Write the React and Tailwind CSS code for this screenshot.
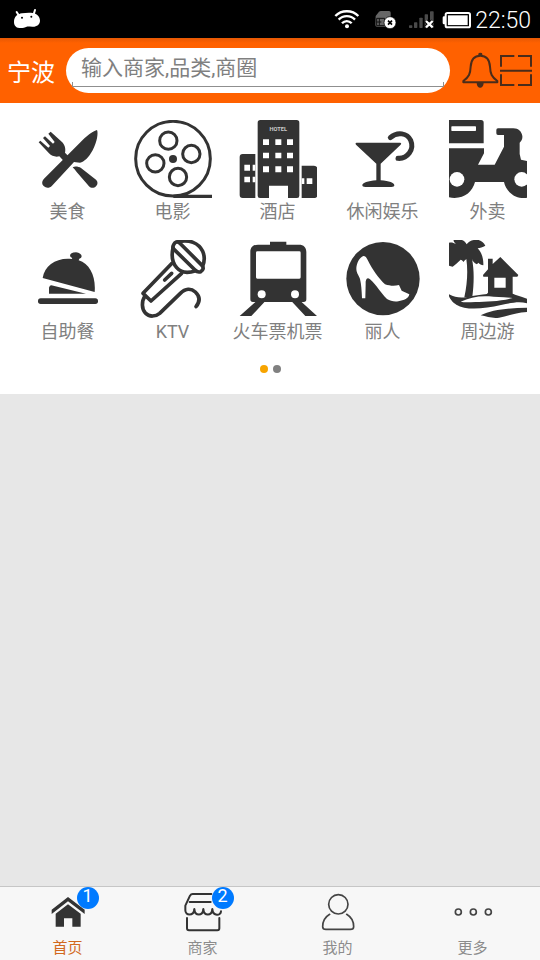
function StatusBar() {
  return (
    <div className="flex h-[38px] items-center justify-between bg-black pl-3 pr-[9px] text-white">
      <svg viewBox="36 24 90 66" className="h-[22px] w-[30px]" aria-hidden="true">
        <path d="M50 36 L56 46 M105 30 L101 43" stroke="#fff" strokeWidth="6" strokeLinecap="round" />
        <path
          d="M42 66 C42 50 52 42 66 40 C76 38 90 37 98 39 C112 41 120 51 120 62 C120 74 109 81 97 80 C89 80 84 79 80 80 C74 83 66 85 58 84 C47 83 42 76 42 66Z"
          fill="#fff"
        />
        <circle cx="66" cy="53" r="3" />
        <circle cx="94" cy="50" r="3" />
      </svg>
      <div className="flex items-center gap-1">
        <svg viewBox="192 24 108 66" className="h-[22px] w-9" fill="none" stroke="#fff" strokeWidth="7" aria-hidden="true">
          <path d="M199 48 C217 29 250 29 268 48" />
          <path d="M209 59 C222 45 245 45 258 59" />
          <path d="M219 70 C227 61 240 61 248 70" />
          <circle cx="234" cy="79" r="6" fill="#fff" stroke="none" />
        </svg>
        <svg viewBox="309 24 90 66" className="h-[22px] w-[30px]" aria-hidden="true">
          <path d="M317 48 L327 35 Q329 33 333 33 H357 Q362 33 362 38 V80 H321 Q316 80 316 75Z" fill="#666" />
          <path d="M320 55 H344 V77 H320Z M320 66 H334 M328 55 V77" stroke="#111" strokeWidth="3" fill="none" />
          <circle cx="360" cy="68" r="18" fill="#fff" stroke="#000" strokeWidth="2" />
          <path d="M354 62 L366 74 M366 62 L354 74" stroke="#000" strokeWidth="5" />
        </svg>
        <svg viewBox="411 24 90 66" className="h-[22px] w-[30px]" aria-hidden="true">
          <g fill="#4a4a4a">
            <rect x="417" y="76" width="10" height="8" rx="2" />
            <rect x="432" y="67" width="10" height="17" rx="2" />
            <rect x="448" y="53" width="10" height="31" rx="2" />
            <rect x="480" y="34" width="11" height="50" rx="2" />
            <rect x="464" y="43" width="10" height="41" rx="2" />
          </g>
          <path d="M468 63 L488 82 M488 63 L468 82" stroke="#000" strokeWidth="12" />
          <path d="M468 63 L488 82 M488 63 L468 82" stroke="#fff" strokeWidth="7" />
        </svg>
        <svg viewBox="513 24 90 66" className="h-[22px] w-[30px]" aria-hidden="true">
          <rect x="527" y="39" width="73" height="43" rx="5" fill="none" stroke="#fff" strokeWidth="6" />
          <path d="M526 49 H522 Q518 49 518 53 V69 Q518 73 522 73 H526Z" fill="#fff" />
          <rect x="533" y="45" width="61" height="31" fill="#fff" stroke="#000" strokeWidth="2" />
        </svg>
        <time className="pt-1 text-[23px] leading-7 font-light">22:50</time>
      </div>
    </div>
  )
}

function SearchHeader() {
  return (
    <header className="flex h-[65px] items-center bg-[#ff6100] bg-linear-to-b from-[#e65804] to-[#ff6100] to-[5px] pl-[7px] pr-2">
      <button type="button" className="pt-1 text-2xl text-white">
        宁波
      </button>
      <form className="mr-3 ml-[11px] h-[45px] min-w-0 flex-1 rounded-full bg-white px-1.5" onSubmit={(e) => e.preventDefault()}>
        <div className="flex h-[39px] items-end border-b border-[#8f8f8f]">
          <span className="h-1 w-px bg-[#8f8f8f]" />
          <input
            type="search"
            aria-label="搜索"
            placeholder="输入商家,品类,商圈"
            className="h-9 min-w-0 flex-1 bg-transparent px-2 text-[21px] outline-none placeholder:text-[#808080]"
          />
          <span className="h-1 w-px bg-[#8f8f8f]" />
        </div>
      </form>
      <button type="button" aria-label="消息">
        <svg viewBox="575 156 114 111" className="h-[37px] w-[38px]" fill="none" stroke="#4a2c1a" strokeWidth="6" strokeLinejoin="round" aria-hidden="true">
          <path d="M630 167 C610 167 602 182 601 200 C600 222 596 230 579 243 V247 H681 V243 C664 230 660 222 659 200 C658 182 650 167 630 167Z" />
          <path d="M624 167 V162 Q624 158 630 158 Q636 158 636 162 V167Z M619 248 H640 C640 268 619 268 619 248Z" fill="#4a2c1a" stroke="none" />
        </svg>
      </button>
      <button type="button" aria-label="扫一扫">
        <svg viewBox="690 162 96 99" className="h-[33px] w-8" fill="none" stroke="#4a2c1a" strokeWidth="6" aria-hidden="true">
          <path d="M693 200 V168 H733 M744 168 H783 V200 M690 212 H786 M693 223 V255 H733 M744 255 H783 V223" />
        </svg>
      </button>
    </header>
  )
}

const FoodIcon = () => (
  <svg viewBox="25 30 234 234" className="size-[78px]" fill="#333" aria-hidden="true">
    <path d="M229 60 C233 68 230 95 216 121 C204 143 190 156 178 158 L160 156 L94 227 C87 235 76 235 70 229 C63 223 63 213 70 206 L180 96 C196 80 214 65 229 60Z" />
    <path d="M54 97 L59 92 L83 113 L88 108 L67 84 L73 79 L97 101 L102 96 L83 71 L90 65 L124 96 C132 104 136 116 133 128 L145 140 L130 154 L116 139 C104 142 93 138 85 130Z" />
    <path d="M156 172 C163 168 174 170 181 174 L226 209 C232 215 232 223 226 229 C220 235 211 235 205 229 L168 186 C164 181 161 177 156 172Z" />
  </svg>
)

const MovieIcon = () => (
  <svg viewBox="340 30 234 234" className="size-[78px]" fill="none" stroke="#333" strokeWidth="9" aria-hidden="true">
    <circle cx="457" cy="146" r="112" />
    <circle cx="443" cy="92" r="26" />
    <circle cx="512" cy="132" r="26" />
    <circle cx="404" cy="160" r="26" />
    <circle cx="472" cy="201" r="26" />
    <circle cx="457" cy="147" r="12" fill="#333" stroke="none" />
    <path d="M458 259 H574" strokeWidth="10" />
  </svg>
)

const HotelIcon = () => (
  <svg viewBox="55 30 234 234" className="size-[78px]" fill="#333" aria-hidden="true">
    <path d="M119 30 H228 Q236 30 236 38 V257 Q236 264 229 264 H202 V227 H145 V264 H118 Q111 264 111 257 V38 Q111 30 119 30Z" />
    <path d="M66 132 H104 V264 H66 Q57 264 57 255 V141 Q57 132 66 132Z M243 167 H280 Q290 167 290 177 V255 Q290 264 281 264 H243Z" />
    <g fill="#fff">
      <path d="M127 88h18v17h-18z M164 88h18v17h-18z M199 88h18v17h-18z" />
      <path d="M127 128h18v17h-18z M164 128h18v17h-18z M199 128h18v17h-18z" />
      <path d="M127 169h18v18h-18z M164 169h18v18h-18z M199 169h18v18h-18z" />
      <path d="M71 164h17v18h-17z M96 164h8v18h-8z M71 200h17v17h-17z M96 200h8v17h-8z M243 205h8v17h-8z M258 205h17v17h-17z" />
    </g>
    <text x="173" y="64" textAnchor="middle" fontSize="17" fontWeight="bold" fill="#ccc">
      HOTEL
    </text>
  </svg>
)

const CocktailIcon = () => (
  <svg viewBox="370 30 234 234" className="size-[78px]" fill="#333" aria-hidden="true">
    <path d="M407 98 H539 Q544 99 540 104 L480 161 V211 C506 213 521 218 521 226 Q521 231 512 231 H434 Q425 231 425 226 C425 218 442 213 467 211 V161 L406 104 Q402 99 407 98Z" />
    <path d="M509 83 C530 64 560 69 570 91 C582 119 560 147 532 145" fill="none" stroke="#333" strokeWidth="15" strokeLinecap="round" />
  </svg>
)

const ScooterIcon = () => (
  <svg viewBox="85 30 234 234" className="size-[78px]" fill="#333" aria-hidden="true">
    <path d="M85 30 H181 Q189 30 189 38 V100 H85Z" />
    <path d="M85 115 H190 V130 L172 164 H222 L250 110 V75 H232 Q227 75 227 70 V60 Q227 55 232 55 H278 C294 55 303 65 305 78 C306 87 302 93 297 98 V132 L301 149 L319 153 V263 C285 270 256 245 250 216 H163 C155 248 126 270 85 262Z" />
    <rect x="92" y="49" width="74" height="14" rx="2" fill="#fff" />
    <circle cx="109" cy="208" r="22" fill="#fff" />
    <circle cx="303" cy="208" r="22" fill="#fff" />
  </svg>
)

const BuffetIcon = () => (
  <svg viewBox="25 30 234 234" className="size-[78px]" fill="#333" aria-hidden="true">
    <path d="M66 144 C72 106 108 82 153 87 L155 84 C143 79 147 67 166 67 C184 69 188 82 176 86 L174 91 C208 102 226 140 222 186Z" />
    <path d="M92 166 L196 191 H85 V173 Q87 166 92 166Z" />
    <rect x="52" y="205" width="180" height="17" rx="8" />
  </svg>
)

const MicIcon = () => (
  <svg viewBox="340 30 234 234" className="size-[78px]" fill="none" stroke="#333" strokeWidth="11" strokeLinejoin="round" strokeLinecap="round" aria-hidden="true">
    <path d="M473 35 C505 28 534 38 546 64 C554 82 551 96 546 108" />
    <path d="M459 44 C463 36 470 33 477 39 L544 106 C550 113 548 120 540 125 C532 128 528 125 523 120 L460 58 C456 54 456 49 459 44Z" />
    <path d="M457 54 C451 80 456 99 468 113 C480 127 500 131 525 122" />
    <path d="M454 100 L367 190 L391 213 L483 130" />
    <path d="M432 150 L453 130" />
    <path d="M373 198 C362 214 363 237 374 249 C386 262 405 260 417 250 L479 190 C494 175 511 174 524 186 C539 200 539 214 526 230" />
  </svg>
)

const TrainIcon = () => (
  <svg viewBox="55 30 234 234" className="size-[78px]" fill="#333" aria-hidden="true">
    <path
      fillRule="evenodd"
      d="M148 35 H197 V44 H235 C249 44 257 52 257 66 V208 Q257 216 249 216 H97 Q89 216 89 208 V66 C89 52 98 44 112 44 H148Z M110 64 Q106 64 106 68 V142 Q106 146 110 146 H236 Q240 146 240 142 V68 Q240 64 236 64Z"
    />
    <circle cx="123" cy="193" r="12" fill="#fff" />
    <circle cx="223" cy="193" r="12" fill="#fff" />
    <path d="M105 215 H132 L92 258 H57Z M214 215 H242 L289 258 H254Z" />
  </svg>
)

const HeelIcon = () => (
  <svg viewBox="370 30 234 234" className="size-[78px]" aria-hidden="true">
    <circle cx="487" cy="146" r="110" fill="#333" />
    <path
      d="M428 78 C434 78 438 83 441 90 C455 118 474 145 493 163 C508 168 521 169 535 165 L543 182 L566 193 C564 205 550 211 533 214 C520 216 509 213 499 207 C481 190 468 166 448 148 C439 140 434 148 435 163 L434 205 H424 C423 181 422 164 418 147 C413 133 407 130 407 115 C408 98 417 82 428 78Z"
      fill="#fff"
    />
  </svg>
)

const TravelIcon = () => (
  <svg viewBox="85 30 234 234" className="size-[78px]" fill="#333" aria-hidden="true">
    <path d="M85 38 C92 36 99 38 106 42 C100 37 98 33 99 30 H124 C131 32 135 37 138 43 C145 32 158 28 174 30 C184 33 190 39 194 47 C186 52 178 54 171 55 C183 67 189 86 188 106 C182 105 177 103 173 98 L169 103 C160 98 155 93 154 86 C161 122 160 160 155 200 L131 202 C140 160 142 122 137 87 C134 90 131 92 129 96 C126 92 123 90 120 89 C112 97 104 104 96 110 L85 107Z" />
    <path
      fillRule="evenodd"
      d="M187 135 L202 118 V86 H216 V102 L239 81 L293 135 L290 140 H276 V191 L286 197 H193 L202 188 V140 H188Z M221 143 V173 H255 V143Z"
    />
    <path d="M85 193 C102 202 116 204 135 202 C168 195 202 190 243 188 C270 187 293 199 319 206 V220 C294 212 272 219 241 225 C189 237 135 242 107 224 C97 219 88 207 85 199Z" />
    <path d="M120 215 C145 203 174 197 205 199 C225 202 247 200 276 204 C240 214 197 215 164 216 C148 216 135 219 120 215Z" fill="#fff" />
    <path d="M180 256 C213 239 263 234 319 233 V246 C280 249 260 258 235 263 C216 266 199 260 180 256Z" />
  </svg>
)

const categories = [
  { name: '美食', Icon: FoodIcon },
  { name: '电影', Icon: MovieIcon },
  { name: '酒店', Icon: HotelIcon },
  { name: '休闲娱乐', Icon: CocktailIcon },
  { name: '外卖', Icon: ScooterIcon },
  { name: '自助餐', Icon: BuffetIcon },
  { name: 'KTV', Icon: MicIcon },
  { name: '火车票机票', Icon: TrainIcon },
  { name: '丽人', Icon: HeelIcon },
  { name: '周边游', Icon: TravelIcon },
]

function CategoryPanel() {
  return (
    <section className="bg-white pt-[17px] pb-[21px]">
      <div className="grid grid-cols-5 gap-y-3.5 pl-[15px]">
        {categories.map(({ name, Icon }) => (
          <button key={name} type="button" className="flex flex-col items-center">
            <Icon />
            <span className="text-lg leading-7 whitespace-nowrap text-[#808080]">{name}</span>
          </button>
        ))}
      </div>
      <div className="mt-[19px] flex justify-center gap-[5px]">
        <span className="size-2 rounded-full bg-[#f7a400]" />
        <span className="size-2 rounded-full bg-[#808080]" />
      </div>
    </section>
  )
}

const HomeIcon = () => (
  <svg viewBox="142 36 120 120" className="size-10" fill="#333" aria-hidden="true">
    <path d="M153 89 L202 51 L252 89 V102 L202 64 L153 102Z" />
    <path d="M165 101 L202 73 L240 101 V140 H215 V115 H190 V140 H165Z" />
  </svg>
)

const ShopIcon = () => (
  <svg viewBox="547 36 120 120" className="size-10" fill="none" stroke="#333" strokeWidth="6" strokeLinecap="round" strokeLinejoin="round" aria-hidden="true">
    <path d="M632 42 H576 Q571 42 568 47 L554 77 V91 C554 108 578 108 581 90 C584 108 605 108 608 90 C611 108 632 108 635 90 C638 108 660 108 661 94" />
    <path d="M567 66 H630 M581 90 V87 M608 90 V87 M635 90 V87" />
    <path d="M559 114 V145 Q559 151 565 151 H650 Q656 151 656 145 V114" />
  </svg>
)

const UserIcon = () => (
  <svg viewBox="142 36 120 120" className="size-10" fill="none" stroke="#444" strokeWidth="5" strokeLinecap="round" aria-hidden="true">
    <circle cx="203" cy="73" r="29" />
    <path d="M177 103 C162 112 156 126 156 140 Q156 148 166 148 H239 Q249 148 249 140 C249 126 243 112 228 103" />
  </svg>
)

const MoreIcon = () => (
  <svg viewBox="547 36 120 120" className="size-10" fill="none" stroke="#444" strokeWidth="5" aria-hidden="true">
    <circle cx="563" cy="96" r="9" />
    <circle cx="608" cy="96" r="9" />
    <circle cx="653" cy="96" r="9" />
  </svg>
)

const tabs = [
  { name: '首页', Icon: HomeIcon, badge: 1, active: true },
  { name: '商家', Icon: ShopIcon, badge: 2 },
  { name: '我的', Icon: UserIcon },
  { name: '更多', Icon: MoreIcon },
]

function TabBar() {
  return (
    <nav className="grid grid-cols-4 border-t border-[#c6c6c6] bg-[#f7f7f7] pt-[5px] pb-0.5">
      {tabs.map(({ name, Icon, badge, active }) => (
        <button key={name} type="button" className="flex flex-col items-center gap-1.5" aria-current={active ? 'page' : undefined}>
          <span className="relative">
            <Icon />
            {badge ? (
              <span className="absolute -top-[5px] left-[29px] size-[22px] rounded-full bg-[#007aff] text-center text-lg leading-[18px] text-white">
                {badge}
              </span>
            ) : null}
          </span>
          <span className={active ? 'text-[15px] leading-5 text-[#d2691e]' : 'text-[15px] leading-5 text-[#8c8c8c]'}>{name}</span>
        </button>
      ))}
    </nav>
  )
}

export default function App() {
  return (
    <div className="flex min-h-screen flex-col bg-[#e7e7e7] font-[Roboto,'Noto_Sans_CJK_SC',sans-serif]">
      <StatusBar />
      <SearchHeader />
      <main className="flex-1">
        <CategoryPanel />
      </main>
      <TabBar />
    </div>
  )
}
